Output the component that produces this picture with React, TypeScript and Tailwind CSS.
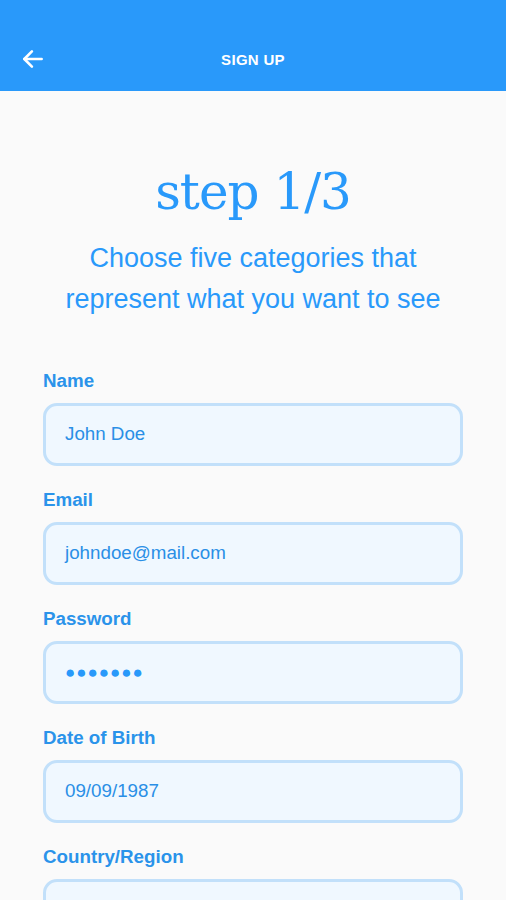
import React from "react";

const fields = [
  { id: 1, label: "Name", value: "John Doe" },
  { id: 2, label: "Email", value: "johndoe@mail.com" },
  { id: 3, label: "Password", value: "●●●●●●●", secret: true },
  { id: 4, label: "Date of Birth", value: "09/09/1987" },
  { id: 5, label: "Country/Region", value: "" },
];

const App = () => {
  return (
    <div className="min-h-screen bg-[#fafafa] font-['Liberation_Sans',Arial,sans-serif]">
      <header className="h-[91px] bg-[#2999fa] flex items-end pb-[20px] px-[20px] relative">
        <svg width="26" height="26" viewBox="0 0 24 24" fill="none" stroke="white" strokeWidth="2.4" strokeLinecap="round" strokeLinejoin="round" className="mb-[-1px]">
          <path d="M20 12H4" />
          <path d="M11 5l-7 7 7 7" />
        </svg>
        <h1 className="absolute left-0 right-0 bottom-[20px] text-center text-white text-[15px] font-bold tracking-[0.3px]">
          SIGN UP
        </h1>
      </header>

      <div className="flex flex-col items-center pt-[71px]">
        <h2 className="text-[#2999fa] text-[50px] leading-[60px] font-['DejaVu_Serif',Georgia,serif] tracking-[-1px]">
          step 1/3
        </h2>
        <p className="mt-[16px] text-center text-[#2999fa] text-[27px] leading-[41px]">
          Choose five categories that
          <br />
          represent what you want to see
        </p>
      </div>

      <form className="px-[43px] mt-[49px] flex flex-col gap-[22px]">
        {fields.map((field) => (
          <div key={field.id} className="flex flex-col">
            <label className="text-[#2a93ea] text-[18.75px] font-bold leading-[24px]">
              {field.label}
            </label>
            <div className="mt-[10px] h-[63px] rounded-[14px] border-[3px] border-[#c2e0fa] bg-[#f0f8ff] flex items-center px-[19px]">
              <span
                className={
                  field.secret
                    ? "text-[#2999fa] text-[17px] tracking-[1px]"
                    : "text-[#2a8fe6] text-[18.75px]"
                }
              >
                {field.value}
              </span>
            </div>
          </div>
        ))}
      </form>
    </div>
  );
};

export default App;
